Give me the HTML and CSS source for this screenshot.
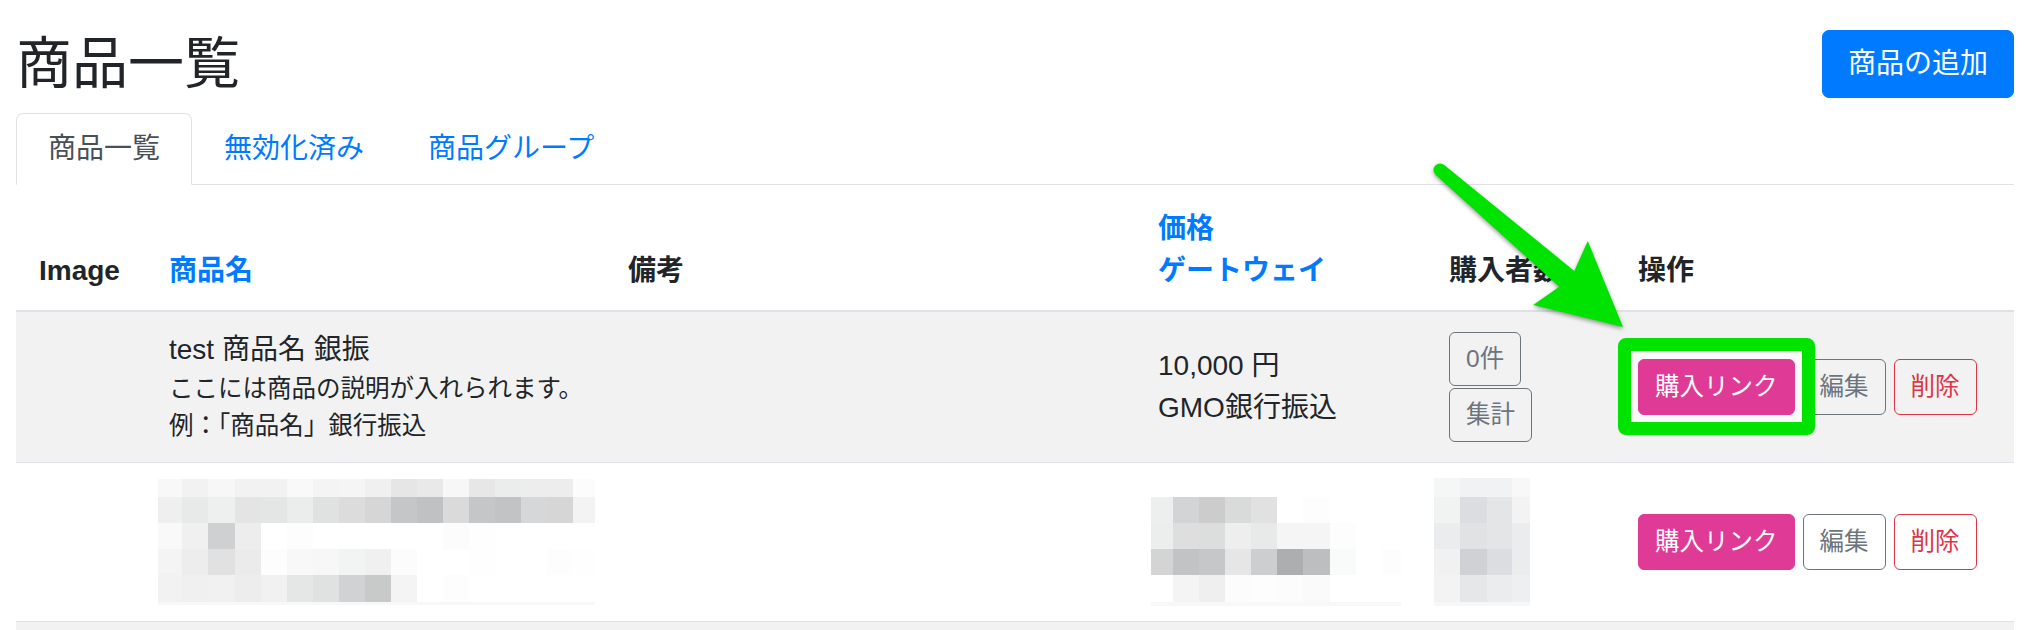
FILE: index.html
```html
<!DOCTYPE html>
<html lang="ja">
<head>
<meta charset="utf-8">
<title>商品一覧</title>
<link rel="stylesheet" href="styles.css">
</head>
<body>
<div class="page">
  <div class="header">
    <h2 class="title">商品一覧</h2>
    <a class="btn btn-primary">商品の追加</a>
  </div>
  <ul class="tabs">
    <li class="tab active">商品一覧</li>
    <li class="tab">無効化済み</li>
    <li class="tab">商品グループ</li>
  </ul>
  <table class="table">
    <colgroup>
      <col class="c-image"><col class="c-name"><col class="c-note"><col class="c-price"><col class="c-buyers"><col class="c-ops">
    </colgroup>
    <thead>
      <tr>
        <th class="th-image">Image</th>
        <th><a class="link">商品名</a></th>
        <th>備考</th>
        <th><a class="link">価格</a><br><a class="link">ゲートウェイ</a></th>
        <th>購入者数</th>
        <th>操作</th>
      </tr>
    </thead>
    <tbody>
      <tr class="striped">
        <td></td>
        <td>
          <div class="name">test 商品名 銀振</div>
          <div class="desc">ここには商品の説明が入れられます。<br>例：「商品名」銀行振込</div>
        </td>
        <td></td>
        <td>10,000 円<br>GMO銀行振込</td>
        <td>
          <div class="stack">
            <a class="btn btn-sm btn-tight btn-outline">0件</a>
            <a class="btn btn-sm btn-tight btn-outline">集計</a>
          </div>
        </td>
        <td>
          <div class="actions">
            <span class="highlight"><a class="btn btn-sm btn-pink">購入リンク</a></span>
            <a class="btn btn-sm btn-outline">編集</a>
            <a class="btn btn-sm btn-danger">削除</a>
          </div>
        </td>
      </tr>
      <tr class="mosaic-row">
        <td></td>
        <td>
          <svg class="mosaic mosaic-name" width="437" height="126" viewBox="0 0 437 126" shape-rendering="crispEdges">
            <g>
              <rect x="0" y="0" width="24" height="18" fill="#f8f8f8"/><rect x="24" y="0" width="26" height="18" fill="#f2f2f2"/><rect x="50" y="0" width="27" height="18" fill="#f7f7f7"/><rect x="77" y="0" width="26" height="18" fill="#f2f2f2"/><rect x="103" y="0" width="26" height="18" fill="#f2f2f2"/><rect x="129" y="0" width="26" height="18" fill="#f9f9f9"/><rect x="155" y="0" width="26" height="18" fill="#f4f4f4"/><rect x="181" y="0" width="26" height="18" fill="#f5f5f5"/><rect x="207" y="0" width="26" height="18" fill="#f0f0f0"/><rect x="233" y="0" width="26" height="18" fill="#e6e6e6"/><rect x="259" y="0" width="26" height="18" fill="#e8e9e8"/><rect x="285" y="0" width="26" height="18" fill="#f7f7f7"/><rect x="311" y="0" width="26" height="18" fill="#e7e7e7"/><rect x="337" y="0" width="26" height="18" fill="#ebecec"/><rect x="363" y="0" width="26" height="18" fill="#ededed"/><rect x="389" y="0" width="26" height="18" fill="#ededed"/><rect x="415" y="0" width="22" height="18" fill="#fcfcfc"/>
            </g>
            <g>
              <rect x="0" y="18" width="24" height="26" fill="#efefef"/><rect x="24" y="18" width="26" height="26" fill="#e8e9e9"/><rect x="50" y="18" width="27" height="26" fill="#eef0f0"/><rect x="77" y="18" width="26" height="26" fill="#e4e4e4"/><rect x="103" y="18" width="26" height="26" fill="#e4e5e5"/><rect x="129" y="18" width="26" height="26" fill="#ebecec"/><rect x="155" y="18" width="26" height="26" fill="#e0e1e1"/><rect x="181" y="18" width="26" height="26" fill="#dcdcdc"/><rect x="207" y="18" width="26" height="26" fill="#d6d6d6"/><rect x="233" y="18" width="26" height="26" fill="#c5c6c7"/><rect x="259" y="18" width="26" height="26" fill="#c0c1c2"/><rect x="285" y="18" width="26" height="26" fill="#dadada"/><rect x="311" y="18" width="26" height="26" fill="#c5c6c7"/><rect x="337" y="18" width="26" height="26" fill="#c2c3c4"/><rect x="363" y="18" width="26" height="26" fill="#d6d7d8"/><rect x="389" y="18" width="26" height="26" fill="#d6d6d6"/><rect x="415" y="18" width="22" height="26" fill="#f3f3f3"/>
            </g>
            <g>
              <rect x="0" y="44" width="24" height="26" fill="#f9f9f9"/><rect x="24" y="44" width="26" height="26" fill="#f0f0f0"/><rect x="50" y="44" width="27" height="26" fill="#cfd0d2"/><rect x="77" y="44" width="26" height="26" fill="#ededed"/><rect x="129" y="44" width="26" height="26" fill="#fdfdfd"/><rect x="285" y="44" width="26" height="26" fill="#fcfcfc"/><rect x="311" y="44" width="26" height="26" fill="#fefefe"/>
            </g>
            <g>
              <rect x="0" y="70" width="24" height="26" fill="#f4f4f4"/><rect x="24" y="70" width="26" height="26" fill="#ededed"/><rect x="50" y="70" width="27" height="26" fill="#e1e1e1"/><rect x="77" y="70" width="26" height="26" fill="#ebebeb"/><rect x="103" y="70" width="26" height="26" fill="#fdfdfd"/><rect x="129" y="70" width="26" height="26" fill="#f8f8f8"/><rect x="155" y="70" width="26" height="26" fill="#f7f7f7"/><rect x="181" y="70" width="26" height="26" fill="#f2f3f3"/><rect x="207" y="70" width="26" height="26" fill="#f0f0f0"/><rect x="233" y="70" width="26" height="26" fill="#fcfcfc"/><rect x="311" y="70" width="26" height="26" fill="#fefefe"/><rect x="389" y="70" width="26" height="26" fill="#fdfdfd"/><rect x="415" y="70" width="22" height="26" fill="#fefefe"/>
            </g>
            <g>
              <rect x="0" y="96" width="24" height="27" fill="#f2f2f2"/><rect x="24" y="96" width="26" height="27" fill="#f0f0f0"/><rect x="50" y="96" width="27" height="27" fill="#f1f1f1"/><rect x="77" y="96" width="26" height="27" fill="#ecedec"/><rect x="103" y="96" width="26" height="27" fill="#f1f1f1"/><rect x="129" y="96" width="26" height="27" fill="#e5e6e6"/><rect x="155" y="96" width="26" height="27" fill="#e0e1e1"/><rect x="181" y="96" width="26" height="27" fill="#d1d2d3"/><rect x="207" y="96" width="26" height="27" fill="#c8c9c9"/><rect x="233" y="96" width="26" height="27" fill="#f4f4f4"/><rect x="285" y="96" width="26" height="27" fill="#fdfdfd"/>
            </g>
            <rect x="0" y="123" width="437" height="3" fill="#f8f8f8"/>
          </svg>
        </td>
        <td></td>
        <td>
          <svg class="mosaic mosaic-price" width="250" height="128" viewBox="0 0 250 128" shape-rendering="crispEdges">
            <rect x="0" y="19" width="22" height="26" fill="#edeeee"/><rect x="22" y="19" width="26" height="26" fill="#d3d4d5"/><rect x="48" y="19" width="26" height="26" fill="#cbcccb"/><rect x="74" y="19" width="26" height="26" fill="#d9dada"/><rect x="100" y="19" width="26" height="26" fill="#e1e1e1"/><rect x="152" y="19" width="27" height="26" fill="#fdfdfd"/>
            <rect x="0" y="45" width="22" height="26" fill="#eceded"/><rect x="22" y="45" width="26" height="26" fill="#dedede"/><rect x="48" y="45" width="26" height="26" fill="#dcdddd"/><rect x="74" y="45" width="26" height="26" fill="#eeeeee"/><rect x="100" y="45" width="26" height="26" fill="#e8e9e9"/><rect x="126" y="45" width="26" height="26" fill="#f5f5f5"/><rect x="152" y="45" width="27" height="26" fill="#f5f5f5"/><rect x="179" y="45" width="26" height="26" fill="#fdfdfd"/>
            <rect x="0" y="71" width="22" height="26" fill="#d4d4d4"/><rect x="22" y="71" width="26" height="26" fill="#c2c3c4"/><rect x="48" y="71" width="26" height="26" fill="#c6c7c8"/><rect x="74" y="71" width="26" height="26" fill="#e6e6e6"/><rect x="100" y="71" width="26" height="26" fill="#cdcecf"/><rect x="126" y="71" width="26" height="26" fill="#adaeaf"/><rect x="152" y="71" width="27" height="26" fill="#bdbec0"/><rect x="179" y="71" width="26" height="26" fill="#f9fafa"/><rect x="231" y="71" width="19" height="26" fill="#fdfdfd"/>
            <rect x="22" y="97" width="26" height="27" fill="#f4f4f4"/><rect x="48" y="97" width="26" height="27" fill="#efefef"/><rect x="74" y="97" width="26" height="27" fill="#fcfcfc"/><rect x="100" y="97" width="26" height="27" fill="#fdfdfd"/><rect x="126" y="97" width="26" height="27" fill="#fcfcfc"/><rect x="152" y="97" width="27" height="27" fill="#fafafa"/>
            <rect x="0" y="124" width="250" height="4" fill="#f8f8f8"/>
          </svg>
        </td>
        <td>
          <svg class="mosaic mosaic-buyers" width="96" height="128" viewBox="0 0 96 128" shape-rendering="crispEdges">
            <rect x="0" y="0" width="26" height="19" fill="#f5f6f6"/><rect x="26" y="0" width="27" height="19" fill="#f1f2f3"/><rect x="53" y="0" width="25" height="19" fill="#f1f2f3"/><rect x="78" y="0" width="18" height="19" fill="#f8f8f8"/>
            <rect x="0" y="19" width="26" height="26" fill="#f1f2f2"/><rect x="26" y="19" width="27" height="26" fill="#dcdde0"/><rect x="53" y="19" width="25" height="26" fill="#e4e5e7"/><rect x="78" y="19" width="18" height="26" fill="#f3f3f3"/>
            <rect x="0" y="45" width="26" height="26" fill="#ebecee"/><rect x="26" y="45" width="27" height="26" fill="#e1e2e4"/><rect x="53" y="45" width="25" height="26" fill="#e4e5e7"/><rect x="78" y="45" width="18" height="26" fill="#ebecee"/>
            <rect x="0" y="71" width="26" height="26" fill="#f1f1f2"/><rect x="26" y="71" width="27" height="26" fill="#d0d1d4"/><rect x="53" y="71" width="25" height="26" fill="#dcdde0"/><rect x="78" y="71" width="18" height="26" fill="#ebecee"/>
            <rect x="0" y="97" width="26" height="27" fill="#f3f3f4"/><rect x="26" y="97" width="27" height="27" fill="#e6e7e9"/><rect x="53" y="97" width="25" height="27" fill="#ebecee"/><rect x="78" y="97" width="18" height="27" fill="#eeeff0"/>
            <rect x="0" y="124" width="96" height="4" fill="#f7f7f7"/>
          </svg>
        </td>
        <td>
          <div class="actions">
            <a class="btn btn-sm btn-pink">購入リンク</a>
            <a class="btn btn-sm btn-outline">編集</a>
            <a class="btn btn-sm btn-danger">削除</a>
          </div>
        </td>
      </tr>
      <tr class="striped filler">
        <td></td><td></td><td></td><td></td><td></td><td></td>
      </tr>
    </tbody>
  </table>
  <svg class="annotation" width="2034" height="630" viewBox="0 0 2034 630">
    <g class="arrow">
      <circle cx="1440" cy="170" r="6.5"/>
      <polygon points="1444.2,165 1574.3,270.9 1587.8,241.1 1623,327 1533.2,304.9 1559.2,286.8 1435.8,175"/>
    </g>
  </svg>
</div>
</body>
</html>
```

FILE: styles.css
```css
* {
  box-sizing: border-box;
}

html {
  overflow: hidden;
}

body {
  margin: 0;
  font-family: "Liberation Sans", "Noto Sans CJK JP", sans-serif;
  font-size: 28px;
  line-height: 1.5;
  color: #212529;
  background: #fff;
}

.page {
  position: relative;
  padding: 30px 20px 0 16px;
}

.header {
  display: flex;
  justify-content: space-between;
  align-items: center;
  margin-bottom: 15px;
}

.title {
  margin: 0;
  font-size: 56px;
  font-weight: 400;
  line-height: 1.2;
  color: #212529;
}

.btn {
  display: inline-block;
  border: 1px solid transparent;
  border-radius: 6px;
  font-size: 24.5px;
  line-height: 36px;
  padding: 9px 16px;
  white-space: nowrap;
  text-decoration: none;
}

.btn-primary {
  background: #007bff;
  border-color: #007bff;
  color: #fff;
  font-size: 28px;
  line-height: 42px;
  padding: 12px 25px;
  border-radius: 7px;
}

.btn-tight {
  padding-top: 8px;
  padding-bottom: 8px;
}

.btn-outline {
  color: #6c757d;
  border-color: #6c757d;
  background: transparent;
}

.btn-danger {
  color: #dc3545;
  border-color: #dc3545;
  background: transparent;
}

.btn-pink {
  position: relative;
  z-index: 2;
  color: #fff;
  background: #e03a97;
  border-color: #e03a97;
}

.tabs {
  display: flex;
  list-style: none;
  margin: 0;
  padding: 0;
  border-bottom: 1px solid #dee2e6;
}

.tab {
  margin-bottom: -1px;
  padding: 14px 31px;
  line-height: 42px;
  border: 1px solid transparent;
  border-radius: 7px 7px 0 0;
  color: #007bff;
}

.tab.active {
  color: #495057;
  background: #fff;
  border-color: #dee2e6 #dee2e6 #fff;
}

.table {
  width: 100%;
  border-collapse: collapse;
  table-layout: fixed;
}

.c-image { width: 132px; }
.c-name { width: 459px; }
.c-note { width: 530px; }
.c-price { width: 291px; }
.c-buyers { width: 189px; }
.c-ops { width: 397px; }

th {
  text-align: left;
  vertical-align: bottom;
  padding: 23px 21px 18px;
  border-bottom: 2px solid #dee2e6;
  font-weight: 700;
  line-height: 42px;
}

.th-image {
  padding-left: 23px;
}

.link {
  color: #007bff;
}

td {
  vertical-align: middle;
  padding: 17px 21px;
  border-top: 1px solid #dee2e6;
}

.mosaic-row td {
  padding-top: 15px;
  padding-bottom: 15px;
}

.striped td {
  background: #f2f2f2;
}

.filler td {
  height: 150px;
}

.name {
  font-size: 28px;
  line-height: 42px;
}

.desc {
  font-size: 24.5px;
  line-height: 1.5;
}

.stack {
  display: flex;
  flex-direction: column;
  align-items: flex-start;
  gap: 2px;
}

.actions {
  display: flex;
  align-items: center;
  gap: 8px;
}

.highlight {
  position: relative;
  display: inline-flex;
}

.highlight::before {
  content: "";
  position: absolute;
  top: -21px;
  bottom: -20px;
  left: -20px;
  right: -20px;
  border: 13px solid #00e300;
  border-radius: 8px;
  background: #fafafa;
  z-index: 1;
}

.mosaic {
  display: block;
}

.mosaic-name {
  margin-left: -11px;
}

.mosaic-price {
  margin-left: -7px;
}

.mosaic-buyers {
  margin-left: -15px;
}

.annotation {
  position: absolute;
  top: 0;
  left: 0;
  z-index: 5;
  pointer-events: none;
}

.arrow {
  fill: #00e300;
  filter: drop-shadow(0 2px 2px rgba(0, 0, 0, 0.4));
}
```
